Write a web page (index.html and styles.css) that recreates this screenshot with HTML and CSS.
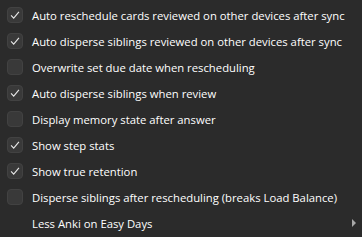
FILE: index.html
```html
<!DOCTYPE html>
<html>
<head>
<meta charset="utf-8">
<link rel="stylesheet" href="styles.css">
</head>
<body>
<div class="menu">
  <div class="item"><span class="box on"><svg viewBox="0 0 16 16"><path d="M3.5 8.5 L6.5 11.5 L12.5 4.5"/></svg></span><span class="label">Auto reschedule cards reviewed on other devices after sync</span></div>
  <div class="item"><span class="box on"><svg viewBox="0 0 16 16"><path d="M3.5 8.5 L6.5 11.5 L12.5 4.5"/></svg></span><span class="label">Auto disperse siblings reviewed on other devices after sync</span></div>
  <div class="item"><span class="box"></span><span class="label">Overwrite set due date when rescheduling</span></div>
  <div class="item"><span class="box on"><svg viewBox="0 0 16 16"><path d="M3.5 8.5 L6.5 11.5 L12.5 4.5"/></svg></span><span class="label">Auto disperse siblings when review</span></div>
  <div class="item"><span class="box"></span><span class="label">Display memory state after answer</span></div>
  <div class="item"><span class="box on"><svg viewBox="0 0 16 16"><path d="M3.5 8.5 L6.5 11.5 L12.5 4.5"/></svg></span><span class="label">Show step stats</span></div>
  <div class="item"><span class="box on"><svg viewBox="0 0 16 16"><path d="M3.5 8.5 L6.5 11.5 L12.5 4.5"/></svg></span><span class="label">Show true retention</span></div>
  <div class="item"><span class="box"></span><span class="label">Disperse siblings after rescheduling (breaks Load Balance)</span></div>
  <div class="item sub"><span class="nobox"></span><span class="label">Less Anki on Easy Days</span><span class="arrow"></span></div>
</div>
</body>
</html>
```
FILE: styles.css
```css
html, body {
  margin: 0;
  padding: 0;
  background: #2b2b2b;
}
.menu {
  width: 362px;
  height: 237px;
  box-sizing: border-box;
  padding-top: 2px;
  background: #2b2b2b;
  font-family: "Open Sans", "Noto Sans", sans-serif;
  font-size: 11.3px;
  color: #ffffff;
}
.item {
  height: 26px;
  display: flex;
  align-items: center;
  position: relative;
}
.box, .nobox {
  width: 16px;
  height: 16px;
  flex: none;
  margin-left: 7px;
  margin-right: 9px;
  box-sizing: border-box;
}
.box {
  border: 1px solid #424242;
  border-radius: 4px;
  background: #393939;
  display: flex;
  align-items: center;
  justify-content: center;
}
.box svg {
  width: 14px;
  height: 14px;
  display: none;
}
.box.on svg {
  display: block;
}
.box svg path {
  fill: none;
  stroke: #e6e6e6;
  stroke-width: 1.3;
}
.label {
  white-space: nowrap;
}
.arrow {
  position: absolute;
  right: 6px;
  top: 9px;
  width: 0;
  height: 0;
  border-left: 4px solid #a8a8a8;
  border-top: 4px solid transparent;
  border-bottom: 4px solid transparent;
}
```
